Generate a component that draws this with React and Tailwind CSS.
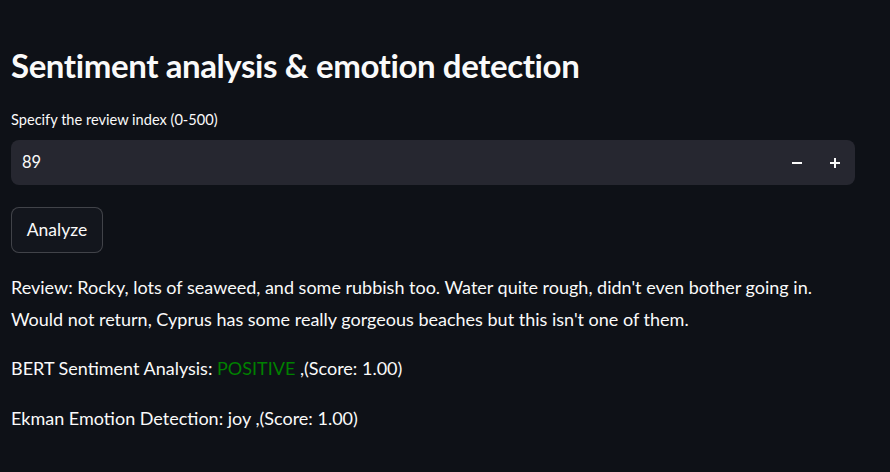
export default function App() {
  return (
    <div className="min-h-screen w-full bg-[#0e1117] text-[#fafafa] font-['Lato',sans-serif]">
      <div className="w-[844px] pl-[11px] pt-[45px] box-content">
        <h1 className="text-[33px] font-bold leading-[40px] tracking-[-0.4px]">
          Sentiment analysis &amp; emotion detection
        </h1>

        <label className="mt-[25px] block text-[14.6px] leading-[20px]">
          Specify the review index (0-500)
        </label>
        <div className="mt-[10px] flex h-[45px] items-center rounded-[8px] bg-[#262730] pl-[11px] pr-[1px]">
          <span className="flex-1 text-[16.5px]">89</span>
          <button className="flex h-full w-[38px] items-center justify-center">
            <svg width="10" height="2" viewBox="0 0 10 2"><rect width="10" height="2" fill="#fafafa" /></svg>
          </button>
          <button className="flex h-full w-[38px] items-center justify-center">
            <svg width="10" height="10" viewBox="0 0 10 10">
              <rect y="4" width="10" height="2" fill="#fafafa" />
              <rect x="4" width="2" height="10" fill="#fafafa" />
            </svg>
          </button>
        </div>

        <button className="mt-[22px] flex h-[46px] w-[92px] items-center justify-center rounded-[8px] border border-[rgba(250,250,250,0.2)] bg-[#13161d] text-[17.5px]">
          Analyze
        </button>

        <p className="mt-[18px] text-[18px] leading-[32px]">
          Review: Rocky, lots of seaweed, and some rubbish too. Water quite rough, didn't even bother going in. Would not return, Cyprus has some really gorgeous beaches but this isn't one of them.
        </p>
        <p className="mt-[17px] text-[18px] leading-[32px]">
          BERT Sentiment Analysis: <span className="text-[#008000]">POSITIVE</span> ,(Score: 1.00)
        </p>
        <p className="mt-[18px] text-[18px] leading-[32px]">
          Ekman Emotion Detection: joy ,(Score: 1.00)
        </p>
      </div>
    </div>
  );
}
